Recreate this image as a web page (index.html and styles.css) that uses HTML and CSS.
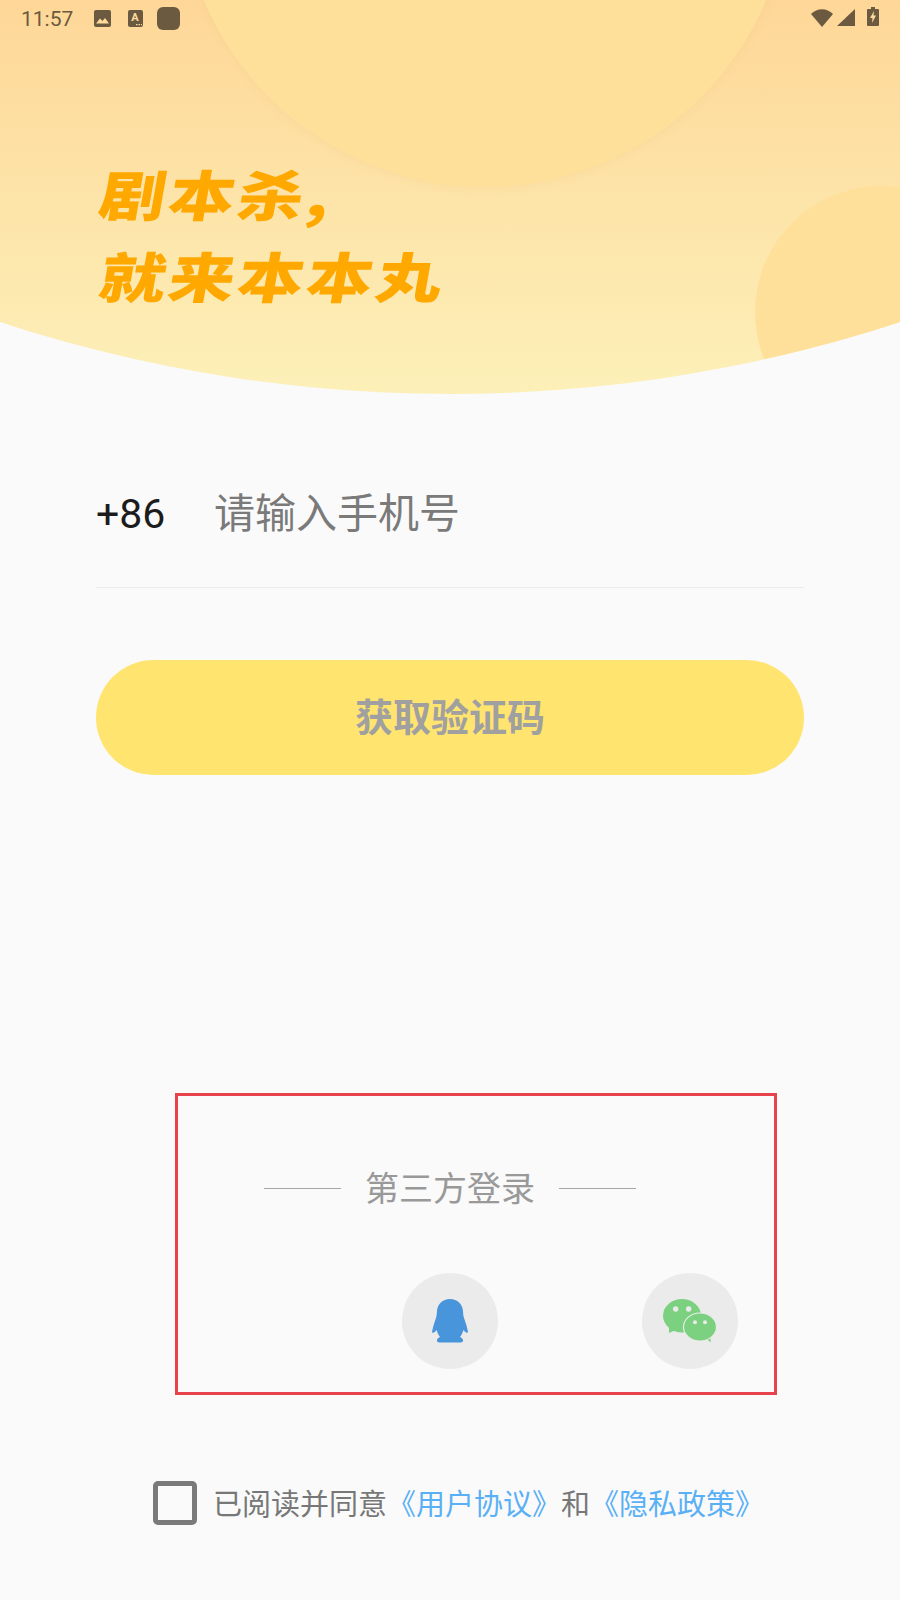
FILE: index.html
```html
<!DOCTYPE html>
<html lang="zh-CN">
<head>
    <meta charset="UTF-8">
    <meta name="viewport" content="width=device-width, initial-scale=1.0">
    <title>本本丸</title>
    <link rel="stylesheet" href="styles.css">
</head>
<body>
    <div class="hero">
        <div class="blob blob-top"></div>
        <div class="blob blob-right"></div>
        <div class="status-bar">
            <div class="status-left">
                <span class="status-time">11:57</span>
                <svg class="icon-photo" width="17" height="17" viewBox="0 0 17 17">
                    <rect width="17" height="17" rx="2" fill="#6b5a40"/>
                    <path d="M2 13.500 6 8.500 8.500 11 11 8 15 13.500Z" fill="#fedb9c"/>
                </svg>
                <svg class="icon-a" width="15" height="17" viewBox="0 0 15 17">
                    <rect width="15" height="17" rx="2" fill="#6b5a40"/>
                    <text x="7" y="10.500" text-anchor="middle" class="icon-a-letter">A</text>
                    <path d="M8 14h1.500v1.200H8zM10.500 14h1.500v1.200h-1.500zM13 14h1v1.200h-1z" fill="#fedb9c"/>
                </svg>
                <div class="status-square"></div>
            </div>
            <div class="status-right">
                <svg width="22" height="18" viewBox="0 0 22 18">
                    <path d="M0 5C6-1.500 16-1.500 22 5L11 18Z" fill="#6b5a40"/>
                </svg>
                <svg width="18" height="17" viewBox="0 0 18 17">
                    <path d="M18 0V17H0Z" fill="#6b5a40"/>
                </svg>
                <svg class="icon-battery" width="12" height="19" viewBox="0 0 12 19">
                    <path d="M4 0H8V2H11A1 1 0 0 1 12 3V18A1 1 0 0 1 11 19H1A1 1 0 0 1 0 18V3A1 1 0 0 1 1 2H4Z" fill="#6b5a40"/>
                    <path d="M7 4 3 11H5.500L5 16 9 8.500H6.500Z" fill="#fedb9c"/>
                </svg>
            </div>
        </div>
        <h1 class="slogan">
            <span class="slogan-line">剧本杀,</span>
            <span class="slogan-line">就来本本丸</span>
        </h1>
    </div>

    <div class="login-form">
        <div class="phone-row">
            <span class="phone-code">+86</span>
            <span class="phone-placeholder">请输入手机号</span>
        </div>
        <button class="code-button">获取验证码</button>
    </div>

    <div class="social-box">
        <div class="social-title">
            <span class="social-line"></span>
            <span class="social-text">第三方登录</span>
            <span class="social-line"></span>
        </div>
        <div class="social-icons">
            <div class="social-circle">
                <svg width="36" height="44" viewBox="0 0 36 44">
                    <path d="M18 0C10.500 0 5.500 5 5 12 4.800 14.500 4.800 16 4.300 18 3 22 1 27 0 33 1 35 3 33 4.500 31 5.500 34 6.500 36 8 38 6 39 4.500 40 5 42 5 43 7 43.500 9 43.500H27C29 43.500 31 43 31 42 31.500 40 30 39 28 38 29.500 36 30.500 34 31.500 31 33 33 35 35 36 33 35 27 33 22 31.700 18 31.200 16 31.200 14.500 31 12 30.500 5 25.500 0 18 0Z" fill="#4895db"/>
                </svg>
            </div>
            <div class="social-circle">
                <svg width="54" height="44" viewBox="0 0 54 44">
                    <path d="M6 28 6 34 13 31Z" fill="#7bd17f"/>
                    <ellipse cx="19" cy="16.700" rx="19" ry="16.700" fill="#7bd17f"/>
                    <circle cx="12.700" cy="10" r="2.700" fill="#ebebeb"/>
                    <circle cx="25.700" cy="10" r="2.700" fill="#ebebeb"/>
                    <path d="M43 39.500 48 43.500 47 37.500Z" fill="#7bd17f"/>
                    <ellipse cx="37" cy="28" rx="16.500" ry="14" fill="#7bd17f" stroke="#ebebeb" stroke-width="1.200"/>
                    <circle cx="32" cy="23.300" r="2" fill="#ebebeb"/>
                    <circle cx="42" cy="23.300" r="2" fill="#ebebeb"/>
                </svg>
            </div>
        </div>
    </div>

    <div class="agreement">
        <span class="agreement-check"></span>
        <p class="agreement-text">已阅读并同意<a class="agreement-link">《用户协议》</a>和<a class="agreement-link">《隐私政策》</a></p>
    </div>
</body>
</html>
```

FILE: styles.css
```css
body {
    font-family: "Noto Sans CJK SC", Roboto, sans-serif;
    background-color: #fafafa;
    width: 900px;
    height: 1600px;
    margin: 0;
    overflow: hidden;
}
.hero {
    position: relative;
    height: 394px;
    overflow: hidden;
    background: linear-gradient(180deg, #fed798 0%, #fcf0b8 100%);
    clip-path: circle(1442px at 450px -1048px);
}
.blob {
    position: absolute;
    border-radius: 50%;
}
.blob-top {
    left: 180px;
    top: -423px;
    width: 610px;
    height: 610px;
    background-color: #fee09b;
    box-shadow: 0 0 8px rgba(240, 200, 130, 0.3);
}
.blob-right {
    left: 755px;
    top: 186px;
    width: 252px;
    height: 252px;
    background-color: #fee09b;
}
.status-bar {
    position: relative;
    display: flex;
    justify-content: space-between;
    height: 38px;
    padding: 0 21px;
    color: #6b5a40;
}
.status-left {
    display: flex;
    align-items: flex-start;
}
.status-time {
    font-family: Roboto, sans-serif;
    font-size: 21px;
    line-height: 38px;
    width: 73px;
}
.icon-photo {
    margin-top: 10px;
}
.icon-a {
    margin: 10px 14px 0 17px;
}
.icon-a-letter {
    font-family: Roboto, sans-serif;
    font-size: 11px;
    font-weight: 700;
    fill: #fedb9c;
}
.status-square {
    width: 23px;
    height: 23px;
    margin-top: 7px;
    background-color: #6b5a40;
    border-radius: 6px;
}
.status-right {
    display: flex;
    align-items: flex-start;
    gap: 4px;
    padding-top: 9px;
}
.icon-battery {
    margin: -2px 0 0 8px;
}
.slogan {
    position: relative;
    margin: 113px 0 0 101px;
    font-size: 66px;
    font-weight: 900;
    color: #ffa800;
    line-height: 82px;
}
.slogan-line {
    display: block;
    width: max-content;
    letter-spacing: 3px;
    transform: skewX(-10deg) scaleY(0.82);
}
.login-form {
    margin: 0 96px;
}
.phone-row {
    display: flex;
    align-items: center;
    padding: 88px 0 45px;
    border-bottom: 1px solid #ebebeb;
    line-height: 60px;
}
.phone-code {
    font-family: Roboto, sans-serif;
    font-size: 41px;
    color: #1c1c1c;
    width: 118px;
    padding-top: 2px;
    height: 58px;
    line-height: 60px;
}
.phone-placeholder {
    font-size: 41px;
    color: #7a7a7a;
    height: 60px;
    margin-top: -4px;
}
.code-button {
    display: block;
    width: 100%;
    height: 115px;
    margin-top: 72px;
    padding: 0 0 6px;
    border: none;
    border-radius: 58px;
    background-color: #ffe470;
    color: #a0a0a0;
    font-family: inherit;
    font-size: 38px;
    font-weight: 700;
}
.social-box {
    box-sizing: border-box;
    width: 602px;
    height: 302px;
    margin: 318px 0 0 175px;
    border: 3px solid #e8434a;
    padding-top: 69px;
}
.social-title {
    display: flex;
    align-items: center;
    justify-content: space-between;
    width: 372px;
    margin-left: 86px;
    height: 44px;
}
.social-line {
    width: 77px;
    height: 1px;
    margin-top: 2px;
    background-color: #a6a6a6;
}
.social-text {
    font-size: 34px;
    line-height: 42px;
    color: #999;
}
.social-icons {
    display: flex;
    gap: 144px;
    margin: 64px 0 0 224px;
}
.social-circle {
    display: flex;
    align-items: center;
    justify-content: center;
    width: 96px;
    height: 96px;
    border-radius: 50%;
    background-color: #ebebeb;
}
.agreement {
    display: flex;
    align-items: center;
    gap: 16px;
    margin: 86px 0 0 153px;
}
.agreement-check {
    box-sizing: border-box;
    width: 44px;
    height: 44px;
    border: 5px solid #7a7a7a;
    border-radius: 5px;
}
.agreement-text {
    margin: -2px 0 0;
    font-size: 29px;
    color: #777;
}
.agreement-link {
    color: #5ab0f5;
}
```
